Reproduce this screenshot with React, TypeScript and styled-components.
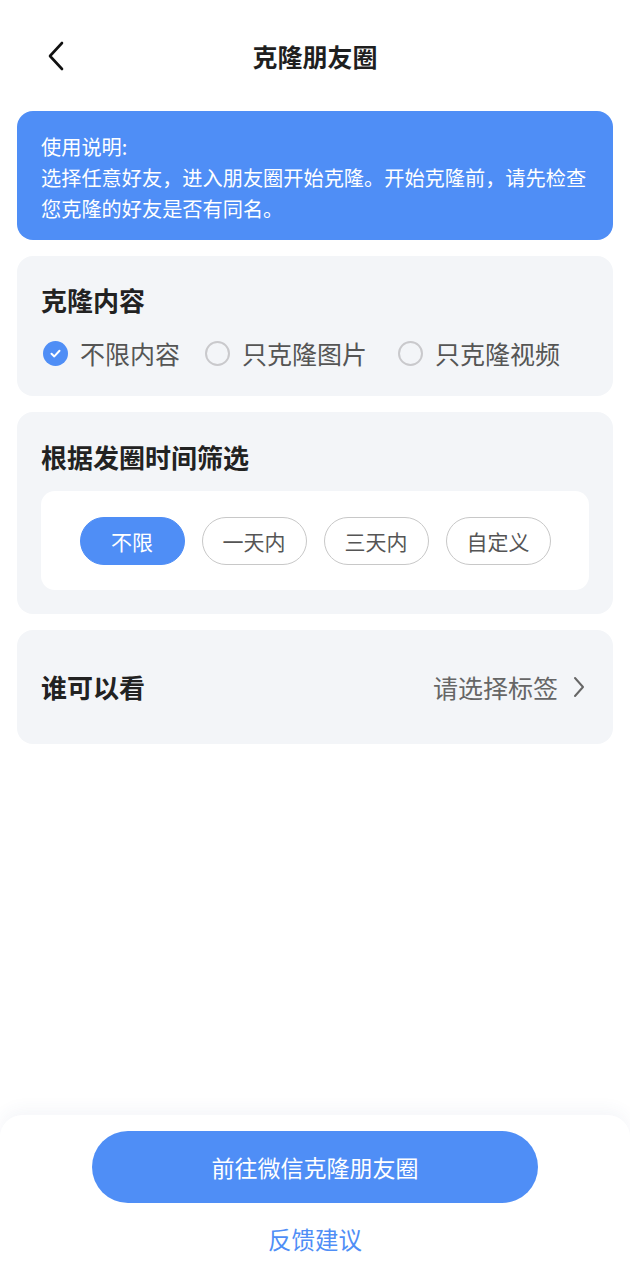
import styled, { createGlobalStyle } from "styled-components";

const GlobalStyle = createGlobalStyle`
  html, body {
    margin: 0;
    padding: 0;
    background: #ffffff;
    font-family: "Noto Sans CJK SC", "Noto Sans", sans-serif;
  }
  * { box-sizing: border-box; }
`;

const BLUE = "#4f8ef6";

const Page = styled.div`
  min-height: 1280px;
  display: flex;
  flex-direction: column;
  background: #ffffff;
`;

const Header = styled.header`
  position: relative;
  height: 80px;
  margin-top: 16px;
  display: flex;
  align-items: center;
  justify-content: center;
`;

const BackButton = styled.div`
  position: absolute;
  left: 44px;
  top: 24px;
  width: 24px;
  height: 32px;
  display: flex;
  align-items: center;
  justify-content: center;
`;

const Title = styled.h1`
  margin: 0;
  font-size: 25px;
  font-weight: 700;
  color: #1f1f1f;
`;

const Content = styled.main`
  padding: 15px 17px 0;
  display: flex;
  flex-direction: column;
  gap: 16px;
  flex: 1;
`;

const Notice = styled.div`
  background: ${BLUE};
  border-radius: 16px;
  padding: 20px 12px 16px 24px;
  color: #ffffff;
  font-size: 20.2px;
  line-height: 31px;
`;

const Card = styled.section`
  background: #f3f5f8;
  border-radius: 16px;
  padding: 26px 24px;
`;

const CardTitle = styled.h2`
  margin: 0;
  font-size: 26px;
  line-height: 36px;
  font-weight: 700;
  color: #222222;
`;

const Options = styled.div`
  margin-top: 18px;
  display: flex;
  align-items: center;
  padding-left: 2px;
`;

const Option = styled.label<{ $gap: number }>`
  display: flex;
  align-items: center;
  gap: 12px;
  margin-right: ${(p) => p.$gap}px;
  font-size: 25px;
  line-height: 34px;
  color: #555555;
`;

const Radio = styled.span<{ $checked?: boolean }>`
  width: 25px;
  height: 25px;
  border-radius: 50%;
  display: flex;
  align-items: center;
  justify-content: center;
  background: ${(p) => (p.$checked ? BLUE : "transparent")};
  border: ${(p) => (p.$checked ? "none" : "2px solid #c9c9cc")};
`;

const FilterCard = styled(Card)`
  padding: 27px 24px 24px;
`;

const ChipBox = styled.div`
  margin-top: 16px;
  background: #ffffff;
  border-radius: 14px;
  height: 99px;
  display: flex;
  align-items: center;
  justify-content: center;
  gap: 17px;
`;

const Chip = styled.div<{ $active?: boolean }>`
  width: 105px;
  height: 48px;
  border-radius: 24px;
  display: flex;
  align-items: center;
  justify-content: center;
  font-size: 21px;
  color: ${(p) => (p.$active ? "#ffffff" : "#555555")};
  background: ${(p) => (p.$active ? BLUE : "#ffffff")};
  border: 1px solid ${(p) => (p.$active ? BLUE : "#c8c8c8")};
`;

const RowCard = styled(Card)`
  height: 114px;
  padding: 0 28px 0 24px;
  display: flex;
  align-items: center;
  justify-content: space-between;
`;

const RowValue = styled.div`
  display: flex;
  align-items: center;
  gap: 15px;
  font-size: 25px;
  color: #666666;
`;

const Footer = styled.footer`
  height: 165px;
  background: #ffffff;
  border-radius: 22px 22px 0 0;
  box-shadow: 0 -6px 16px rgba(60, 80, 140, 0.05);
  display: flex;
  flex-direction: column;
  align-items: center;
  padding-top: 16px;
`;

const PrimaryButton = styled.button`
  width: 446px;
  height: 72px;
  border: none;
  border-radius: 36px;
  background: ${BLUE};
  color: #ffffff;
  font-family: inherit;
  font-size: 23px;
`;

const LinkText = styled.div`
  margin-top: 19px;
  font-size: 23.5px;
  line-height: 34px;
  color: ${BLUE};
`;

const Check = () => (
  <svg width="13" height="13" viewBox="0 0 13 13" fill="none">
    <path d="M2.5 6.8 L5.3 9.4 L10.5 3.8" stroke="#fff" strokeWidth="2" strokeLinecap="round" strokeLinejoin="round" />
  </svg>
);

const contentOptions = [
  { label: "不限内容", checked: true, gap: 25 },
  { label: "只克隆图片", checked: false, gap: 31 },
  { label: "只克隆视频", checked: false, gap: 0 },
];

const timeOptions = ["不限", "一天内", "三天内", "自定义"];

export default function App() {
  return (
    <Page>
      <GlobalStyle />
      <Header>
        <BackButton>
          <svg width="18" height="30" viewBox="0 0 18 30" fill="none">
            <path d="M15 2 L3 15 L15 28" stroke="#111" strokeWidth="2.6" strokeLinecap="round" strokeLinejoin="round" />
          </svg>
        </BackButton>
        <Title>克隆朋友圈</Title>
      </Header>

      <Content>
        <Notice>
          使用说明:
          <br />
          选择任意好友，进入朋友圈开始克隆。开始克隆前，请先检查您克隆的好友是否有同名。
        </Notice>

        <Card>
          <CardTitle>克隆内容</CardTitle>
          <Options>
            {contentOptions.map((o) => (
              <Option key={o.label} $gap={o.gap}>
                <Radio $checked={o.checked}>{o.checked && <Check />}</Radio>
                {o.label}
              </Option>
            ))}
          </Options>
        </Card>

        <FilterCard>
          <CardTitle>根据发圈时间筛选</CardTitle>
          <ChipBox>
            {timeOptions.map((t, i) => (
              <Chip key={t} $active={i === 0}>
                {t}
              </Chip>
            ))}
          </ChipBox>
        </FilterCard>

        <RowCard>
          <CardTitle>谁可以看</CardTitle>
          <RowValue>
            请选择标签
            <svg width="12" height="22" viewBox="0 0 12 22" fill="none">
              <path d="M2 2 L10 11 L2 20" stroke="#666" strokeWidth="2" strokeLinecap="round" strokeLinejoin="round" />
            </svg>
          </RowValue>
        </RowCard>
      </Content>

      <Footer>
        <PrimaryButton>前往微信克隆朋友圈</PrimaryButton>
        <LinkText>反馈建议</LinkText>
      </Footer>
    </Page>
  );
}
